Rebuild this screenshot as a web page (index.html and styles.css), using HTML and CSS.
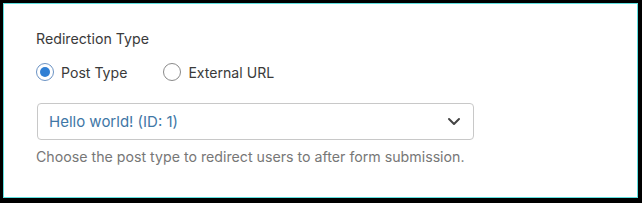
FILE: index.html
```html
<!DOCTYPE html>
<html lang="en">
<head>
    <meta charset="UTF-8">
    <meta name="viewport" content="width=device-width, initial-scale=1.0">
    <title>Redirection Type</title>
    <link rel="stylesheet" href="styles.css">
</head>
<body>

    <div class="frame">
        <div class="panel">
            <div class="field-label">Redirection Type</div>

            <div class="radio-row">
                <label class="radio-option">
                    <span class="radio checked"></span>
                    Post Type
                </label>
                <label class="radio-option">
                    <span class="radio"></span>
                    External URL
                </label>
            </div>

            <div class="select-box">
                <span class="select-value">Hello world! (ID: 1)</span>
                <svg class="chevron" width="14" height="9" viewBox="0 0 14 9">
                    <path d="M2 2 L7 7 L12 2" fill="none" stroke="#444" stroke-width="2" stroke-linecap="round" stroke-linejoin="round"/>
                </svg>
            </div>

            <p class="help-text">Choose the post type to redirect users to after form submission.</p>
        </div>
    </div>

</body>
</html>
```

FILE: styles.css
```css
body {
    margin: 0;
    padding: 0;
    background-color: #000;
    font-family: Inter, "Noto Sans", sans-serif;
}
.frame {
    width: 642px;
    height: 203px;
    box-sizing: border-box;
    padding: 3px 4px 5px 3px;
    background-color: #000;
}
.panel {
    height: 100%;
    box-sizing: border-box;
    background-color: #fff;
    border: 1px solid #5fe0e0;
    padding: 26px 32px 0 32px;
}
.field-label {
    font-size: 14.2px;
    color: #3a3a3a;
    line-height: 18px;
}
.radio-row {
    display: flex;
    gap: 36px;
    margin-top: 15px;
}
.radio-option {
    display: flex;
    align-items: center;
    gap: 7px;
    font-size: 14.1px;
    color: #3a3a3a;
}
.radio {
    width: 18px;
    height: 18px;
    border: 1px solid #8a8a8a;
    border-radius: 50%;
    box-sizing: border-box;
    display: flex;
    align-items: center;
    justify-content: center;
}
.radio.checked {
    border-color: #6b93c4;
}
.radio.checked::after {
    content: "";
    width: 10px;
    height: 10px;
    border-radius: 50%;
    background-color: #2f7fd4;
}
.select-box {
    width: 437px;
    height: 37px;
    box-sizing: border-box;
    margin-top: 22px;
    margin-left: 1px;
    border: 1px solid #c8c8c8;
    border-radius: 4px;
    display: flex;
    align-items: center;
    justify-content: space-between;
    padding: 0 12px 0 11px;
}
.select-value {
    font-size: 15px;
    color: #3f77a6;
}
.help-text {
    margin: 8px 0 0 0;
    font-size: 14.2px;
    color: #777;
}
```
